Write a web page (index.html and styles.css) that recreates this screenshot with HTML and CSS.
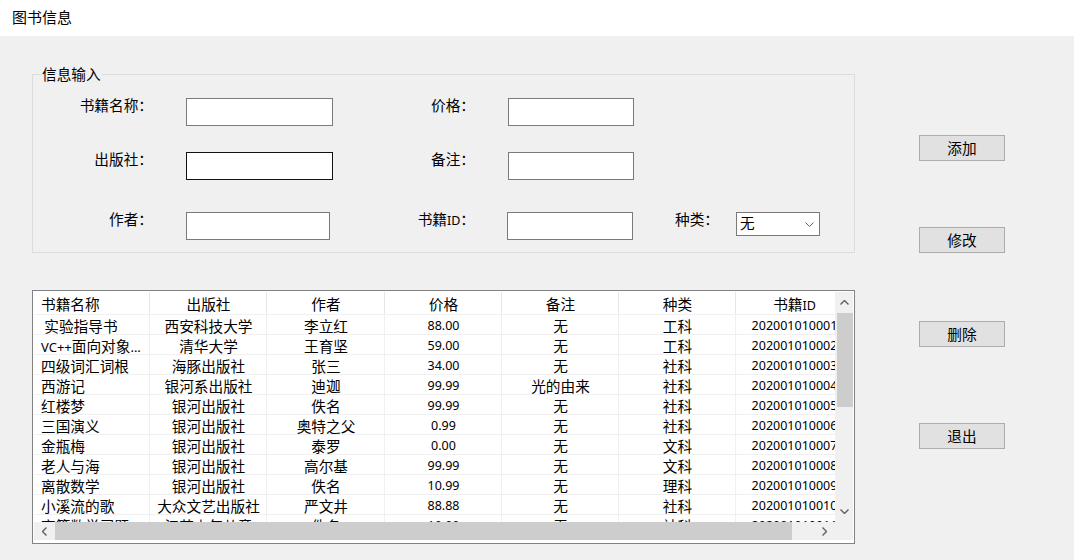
FILE: index.html
```html
<!DOCTYPE html>
<html lang="zh-CN">
<head>
<meta charset="utf-8">
<title>图书信息</title>
<link rel="stylesheet" href="styles.css">
</head>
<body>
<div class="titlebar">图书信息</div>
<div class="main">
  <div class="left">
    <fieldset class="group">
      <legend>信息输入</legend>
      <div class="row">
        <label class="lbl l1">书籍名称：</label>
        <input class="inp in1" type="text">
        <label class="lbl l2">价格：</label>
        <input class="inp in2" type="text">
      </div>
      <div class="row r2">
        <label class="lbl l1">出版社：</label>
        <input class="inp in1 focus" type="text">
        <label class="lbl l2">备注：</label>
        <input class="inp in2" type="text">
      </div>
      <div class="row r3">
        <label class="lbl l1">作者：</label>
        <input class="inp in1 short" type="text">
        <label class="lbl l2 wide">书籍<span class="n id">ID</span>：</label>
        <input class="inp in2 shift" type="text">
        <label class="lbl l3">种类：</label>
        <div class="combo">
          <span class="combo-text">无</span>
          <svg width="9" height="5" viewBox="0 0 9 5"><polyline points="0.5,0.5 4.5,4.5 8.5,0.5" fill="none" stroke="#606060" stroke-width="1"/></svg>
        </div>
      </div>
    </fieldset>

    <div class="table">
      <div class="viewport">
        <div class="tr thead">
          <div class="c1">书籍名称</div><div>出版社</div><div>作者</div><div>价格</div><div>备注</div><div>种类</div><div>书籍<span class="n id">ID</span></div>
        </div>
        <div class="tr"><div class="c1">&nbsp;实验指导书</div><div>西安科技大学</div><div>李立红</div><div class="n">88.00</div><div>无</div><div>工科</div><div class="n">202001010001</div></div>
        <div class="tr"><div class="c1"><span class="n lat">VC++</span>面向对象<span class="n lat">...</span></div><div>清华大学</div><div>王育坚</div><div class="n">59.00</div><div>无</div><div>工科</div><div class="n">202001010002</div></div>
        <div class="tr"><div class="c1">四级词汇词根</div><div>海豚出版社</div><div>张三</div><div class="n">34.00</div><div>无</div><div>社科</div><div class="n">202001010003</div></div>
        <div class="tr"><div class="c1">西游记</div><div>银河系出版社</div><div>迪迦</div><div class="n">99.99</div><div>光的由来</div><div>社科</div><div class="n">202001010004</div></div>
        <div class="tr"><div class="c1">红楼梦</div><div>银河出版社</div><div>佚名</div><div class="n">99.99</div><div>无</div><div>社科</div><div class="n">202001010005</div></div>
        <div class="tr"><div class="c1">三国演义</div><div>银河出版社</div><div>奥特之父</div><div class="n">0.99</div><div>无</div><div>社科</div><div class="n">202001010006</div></div>
        <div class="tr"><div class="c1">金瓶梅</div><div>银河出版社</div><div>泰罗</div><div class="n">0.00</div><div>无</div><div>文科</div><div class="n">202001010007</div></div>
        <div class="tr"><div class="c1">老人与海</div><div>银河出版社</div><div>高尔基</div><div class="n">99.99</div><div>无</div><div>文科</div><div class="n">202001010008</div></div>
        <div class="tr"><div class="c1">离散数学</div><div>银河出版社</div><div>佚名</div><div class="n">10.99</div><div>无</div><div>理科</div><div class="n">202001010009</div></div>
        <div class="tr"><div class="c1">小溪流的歌</div><div>大众文艺出版社</div><div>严文井</div><div class="n">88.88</div><div>无</div><div>社科</div><div class="n">202001010010</div></div>
        <div class="tr"><div class="c1">高等数学习题</div><div>江苏少年儿童</div><div>佚名</div><div class="n">19.99</div><div>无</div><div>社科</div><div class="n">202001010011</div></div>
      </div>
      <div class="vscroll">
        <div class="arrow"><svg width="9" height="5" viewBox="0 0 9 5"><polyline points="0.5,4.5 4.5,0.5 8.5,4.5" fill="none" stroke="#606060" stroke-width="1.4"/></svg></div>
        <div class="vthumb"></div>
        <div class="track"></div>
        <div class="arrow"><svg width="9" height="5" viewBox="0 0 9 5"><polyline points="0.5,0.5 4.5,4.5 8.5,0.5" fill="none" stroke="#606060" stroke-width="1.4"/></svg></div>
      </div>
      <div class="hscroll">
        <div class="harrow"><svg width="5" height="9" viewBox="0 0 5 9"><polyline points="4.5,0.5 0.5,4.5 4.5,8.5" fill="none" stroke="#606060" stroke-width="1.4"/></svg></div>
        <div class="hthumb"></div>
        <div class="track"></div>
        <div class="harrow"><svg width="5" height="9" viewBox="0 0 5 9"><polyline points="0.5,0.5 4.5,4.5 0.5,8.5" fill="none" stroke="#606060" stroke-width="1.4"/></svg></div>
      </div>
      <div class="corner"></div>
    </div>
  </div>

  <div class="buttons">
    <button class="btn b1">添加</button>
    <button class="btn b2">修改</button>
    <button class="btn b3">删除</button>
    <button class="btn b4">退出</button>
  </div>
</div>
</body>
</html>
```
FILE: styles.css
```css
* { box-sizing: border-box; }
html, body { margin: 0; padding: 0; }
body {
  width: 1074px;
  height: 560px;
  overflow: hidden;
  background: #f0f0f0;
  color: #000;
  font-family: "Noto Sans CJK SC", "Noto Sans", sans-serif;
  font-size: 14.67px;
}

.titlebar {
  height: 36px;
  background: #fff;
  padding-left: 12px;
  line-height: 34px;
  font-size: 15px;
}

.main {
  display: flex;
  height: 524px;
}

.left {
  margin-left: 32px;
  width: 823px;
  display: flex;
  flex-direction: column;
}

/* ---------- group box ---------- */
.group {
  margin: 29px 0 0;
  padding: 15px 0 12px;
  border: 1px solid #dcdcdc;
  min-width: 0;
}
.group legend {
  margin-left: 8px;
  padding: 0 1px;
  line-height: 18px;
  font-size: 14.67px;
}

.row {
  display: flex;
  align-items: flex-start;
  height: 28px;
}
.row.r2 { margin-top: 26px; }
.row.r3 { margin-top: 32px; }

.lbl {
  line-height: 14px;
  text-align: right;
  white-space: nowrap;
  font-size: 14.67px;
}
.l1 { width: 120px; }
.l2 { margin-left: 42px; width: 100px; }
.l2.wide { margin-left: 45px; }
.l3 { margin-left: 42px; width: 42px; }

.inp {
  display: block;
  height: 28px;
  margin: 0;
  padding: 0 3px;
  border: 1px solid #7a7a7a;
  background: #fff;
  font: inherit;
  outline: none;
  appearance: none;
}
.inp.focus { border-color: #111; }
.in1 { margin-left: 33px; width: 147px; }
.in1.short { width: 144px; }
.in2 { margin-left: 33px; width: 126px; }
.in2.shift { margin-left: 32px; }

.combo {
  margin-left: 19px;
  width: 84px;
  height: 24px;
  border: 1px solid #7a7a7a;
  background: #fff;
  display: flex;
  align-items: center;
  justify-content: space-between;
  padding: 0 5px 0 3px;
}
.combo-text {
  line-height: 18px;
  margin-top: -3px;
}
.combo svg { display: block; margin-top: 1px; }

.n {
  font-family: "Noto Sans", "Noto Sans CJK SC", sans-serif;
  font-size: 12.5px;
}
.lat { font-size: 13px; }
.id { font-size: 12.5px; }

/* ---------- list table ---------- */
.table {
  margin-top: 37px;
  height: 254px;
  border: 1px solid #828282;
  padding: 1px;
  background: #fff;
  display: grid;
  grid-template-columns: 801px 18px;
  grid-template-rows: 230px 20px;
}
.viewport {
  overflow: hidden;
}
.tr {
  display: grid;
  grid-template-columns: 116px 117px 118px 117px 117px 117px 117px;
  height: 20px;
}
.tr > div {
  padding-top: 1px;
  line-height: 19px;
  text-align: center;
  white-space: nowrap;
  overflow: hidden;
  box-shadow: inset 0 -1px #f0f0f0, inset -1px 0 #f0f0f0;
}
.tr > div.c1 {
  text-align: left;
  padding-left: 7px;
}
.tr.thead { height: 23px; }
.tr.thead > div {
  padding-top: 0;
  line-height: 23px;
  box-shadow: inset 0 -1px #f0f0f0, inset -1px 0 #e5e5e5;
}

.vscroll {
  background: #f0f0f0;
  display: flex;
  flex-direction: column;
}
.vscroll .arrow {
  height: 21px;
  display: flex;
  align-items: center;
  justify-content: center;
  padding-left: 1px;
}
.vthumb {
  margin-left: 2px;
  height: 94px;
  background: #cdcdcd;
}
.track { flex: 1; }

.hscroll {
  display: flex;
  height: 18px;
  background: #f0f0f0;
}
.harrow {
  width: 21px;
  display: flex;
  align-items: center;
  justify-content: center;
}
.hthumb {
  width: 737px;
  background: #cdcdcd;
}
.corner {
  height: 18px;
  background: #f0f0f0;
}

/* ---------- buttons ---------- */
.buttons {
  margin-left: 64px;
  display: flex;
  flex-direction: column;
  align-items: flex-start;
}
.btn {
  width: 86px;
  height: 26px;
  margin: 0;
  padding: 0;
  border: 1px solid #adadad;
  background: #e1e1e1;
  color: #000;
  font: inherit;
  font-size: 14.67px;
  line-height: 22px;
  text-align: center;
}
.b1 { margin-top: 99px; }
.b2 { margin-top: 66px; }
.b3 { margin-top: 68px; }
.b4 { margin-top: 76px; }
```
